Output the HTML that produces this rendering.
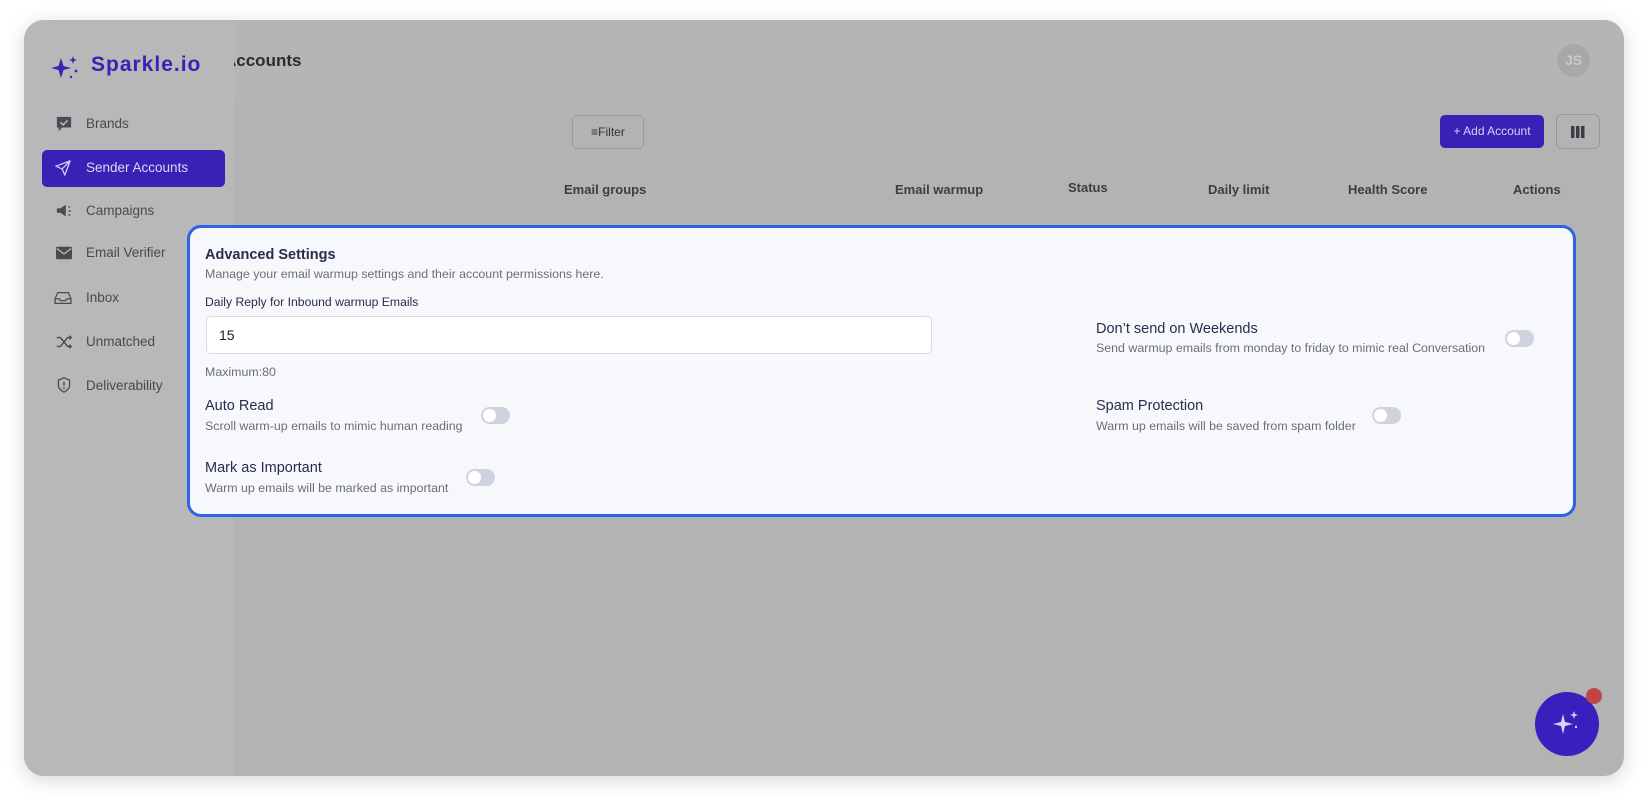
<!DOCTYPE html>
<html><head><meta charset="utf-8"><style>
*{box-sizing:border-box;margin:0;padding:0}
body{width:1648px;height:804px;background:#fff;font-family:"Liberation Sans",sans-serif;position:relative;overflow:hidden}
.frame{position:absolute;left:24px;top:20px;width:1600px;height:756px;border-radius:20px;background:#b3b3b3;overflow:hidden;box-shadow:0 4px 18px rgba(90,90,130,.25);z-index:1}
.side{position:absolute;left:0;top:0;width:210px;height:756px;background:#b8b8b8;z-index:2}
.hdr{position:absolute;left:210px;top:0;right:0;height:83px;background:#b5b5b5}
.a{position:absolute;white-space:nowrap;z-index:3}
.nav{font-size:13.5px;color:#4a4a4a}
.ic{position:absolute;width:18px;height:16px;z-index:3}
.th{font-size:13px;font-weight:bold;color:#3d3d45;position:absolute}
.card{position:absolute;left:187px;top:225px;width:1389px;height:292px;border:3px solid #2e63e6;border-radius:14px;background:#f7f8fb;z-index:10}
.t{position:absolute;white-space:nowrap;color:#2a2c4a}
.d{position:absolute;white-space:nowrap;color:#6b6e7a;font-size:12.4px}
.tg{position:absolute;width:29px;height:17px;border-radius:9px;background:#d0d3de}
.tg::after{content:"";position:absolute;left:2px;top:2px;width:13px;height:13px;border-radius:50%;background:#fff}
</style></head><body>
<div class="frame">
 <div class="hdr"></div>
 <div class="a" style="left:200px;top:31px;font-size:17px;font-weight:bold;color:#2b2b33;z-index:1">Accounts</div>
 <div class="side"></div>
 <svg class="a" style="left:27px;top:34px" width="32" height="28" viewBox="0 0 32 28"><path d="M10 4 L12.5 12 L20 14 L12.5 16 L10 24 L7.5 16 L0 14 L7.5 12Z" fill="#3a22b5"/><path d="M22 2 L23 5 L26 6 L23 7 L22 10 L21 7 L18 6 L21 5Z" fill="#3a22b5"/><circle cx="25" cy="17" r="1.4" fill="#3a22b5"/><circle cx="20" cy="23" r="1.2" fill="#3a22b5"/></svg>
 <div class="a" style="left:67px;top:33px;font-size:21px;font-weight:bold;color:#3a22b5;letter-spacing:1px">Sparkle.io</div>
 <div class="a" style="left:1533px;top:24px;width:33px;height:33px;border-radius:50%;background:#a8a8a8;color:#c8c8c8;font-size:14px;font-weight:bold;text-align:center;line-height:33px">JS</div>

 <svg class="ic" style="left:31px;top:96px" viewBox="0 0 18 18"><path d="M1 1h16v12H7l-4 4v-4H1z" fill="#4a4a55"/><path d="M5 7l3 3 5-5" stroke="#b8b8b8" stroke-width="1.8" fill="none"/></svg>
 <div class="a nav" style="left:62px;top:96px">Brands</div>
 <div class="a" style="left:18px;top:130px;width:183px;height:37px;border-radius:5px;background:#3a20b5"></div>
 <svg class="ic" style="left:30px;top:140px" viewBox="0 0 18 18"><path d="M17 1L1 7l7 3 3 7z M8 10l9-9" stroke="#d6d2f0" stroke-width="1.4" fill="none" stroke-linejoin="round"/></svg>
 <div class="a nav" style="left:62px;top:140px;color:#dcd8f2">Sender Accounts</div>
 <svg class="ic" style="left:31px;top:183px" viewBox="0 0 18 18"><path d="M1 6h4l6-4v13l-6-4H1z" fill="#4a4a55"/><path d="M14 5l2-1M14 9h3M14 13l2 1" stroke="#4a4a55" stroke-width="1.3"/></svg>
 <div class="a nav" style="left:62px;top:183px">Campaigns</div>
 <svg class="ic" style="left:31px;top:225px" viewBox="0 0 18 18"><rect x="0" y="2" width="18" height="14" rx="1.5" fill="#4a4a55"/><path d="M1 4l8 6 8-6" stroke="#b8b8b8" stroke-width="1.5" fill="none"/></svg>
 <div class="a nav" style="left:62px;top:225px">Email Verifier</div>
 <svg class="ic" style="left:30px;top:270px" viewBox="0 0 20 18"><path d="M1 10l3-7h12l3 7v5H1z M1 10h5l1 2h6l1-2h5" stroke="#4a4a55" stroke-width="1.4" fill="none"/></svg>
 <div class="a nav" style="left:62px;top:270px">Inbox</div>
 <svg class="ic" style="left:31px;top:314px" viewBox="0 0 18 18"><path d="M1 4h4l8 10h4M1 14h4l8-10h4M15 2l2 2-2 2M15 12l2 2-2 2" stroke="#4a4a55" stroke-width="1.6" fill="none"/></svg>
 <div class="a nav" style="left:62px;top:314px">Unmatched</div>
 <svg class="ic" style="left:31px;top:357px" viewBox="0 0 18 20"><path d="M9 1l7 3v6c0 4-3 7-7 9-4-2-7-5-7-9V4z" stroke="#4a4a55" stroke-width="1.6" fill="none"/><path d="M9 6v5" stroke="#4a4a55" stroke-width="1.8"/><circle cx="9" cy="14" r="1.1" fill="#4a4a55"/></svg>
 <div class="a nav" style="left:62px;top:358px">Deliverability</div>

 <div class="a" style="left:548px;top:95px;width:72px;height:34px;border:1px solid #9c9c9c;border-radius:5px;font-size:12px;color:#333;line-height:32px;text-align:center">&#8801;Filter</div>
 <div class="a" style="left:1416px;top:95px;width:104px;height:33px;border-radius:5px;background:#3a20b5;color:#d8d4f0;font-size:12px;line-height:33px;text-align:center">+ Add Account</div>
 <div class="a" style="left:1532px;top:94px;width:44px;height:35px;border:1.5px solid #999;border-radius:6px"><svg style="position:absolute;left:14px;top:11px" width="14" height="12"><rect x="0" y="0" width="3.5" height="12" fill="#3d3d45"/><rect x="5" y="0" width="3.5" height="12" fill="#3d3d45"/><rect x="10" y="0" width="3.5" height="12" fill="#3d3d45"/></svg></div>

 <div class="th" style="left:540px;top:162px">Email groups</div>
 <div class="th" style="left:871px;top:162px">Email warmup</div>
 <div class="th" style="left:1044px;top:160px">Status</div>
 <div class="th" style="left:1184px;top:162px">Daily limit</div>
 <div class="th" style="left:1324px;top:162px">Health Score</div>
 <div class="th" style="left:1489px;top:162px">Actions</div>

 <div class="a" style="left:1511px;top:672px;width:64px;height:64px;border-radius:50%;background:#3a1fbf"></div>
 <svg class="a" style="left:1528px;top:688px" width="30" height="30" viewBox="0 0 30 30"><path d="M11 6L13 14L21 16L13 18L11 26L9 18L1 16L9 14Z" fill="#d8d4f5"/><path d="M22 3L23 6L26 7L23 8L22 11L21 8L18 7L21 6Z" fill="#d8d4f5"/><circle cx="24" cy="19" r="1.2" fill="#d8d4f5"/></svg>
 <div class="a" style="left:1562px;top:668px;width:16px;height:16px;border-radius:50%;background:#c04545"></div>
</div>

<div class="card">
 <div class="t" style="left:15px;top:19px;font-size:14.5px;font-weight:bold">Advanced Settings</div>
 <div class="d" style="left:15px;top:39px">Manage your email warmup settings and their account permissions here.</div>
 <div class="t" style="left:15px;top:67px;font-size:12.2px">Daily Reply for Inbound warmup Emails</div>
 <div class="a" style="left:16px;top:88px;width:726px;height:38px;background:#fff;border:1px solid #dcdde3;border-radius:5px;font-size:14px;color:#222;padding:10px 12px">15</div>
 <div class="d" style="left:15px;top:137px">Maximum:80</div>
 <div class="t" style="left:15px;top:170px;font-size:14.5px">Auto Read</div>
 <div class="d" style="left:15px;top:191px">Scroll warm-up emails to mimic human reading</div>
 <div class="tg" style="left:291px;top:179px"></div>
 <div class="t" style="left:15px;top:232px;font-size:14.5px">Mark as Important</div>
 <div class="d" style="left:15px;top:253px">Warm up emails will be marked as important</div>
 <div class="tg" style="left:276px;top:241px"></div>
 <div class="t" style="left:906px;top:93px;font-size:14.5px">Don’t send on Weekends</div>
 <div class="d" style="left:906px;top:113px">Send warmup emails from monday to friday to mimic real Conversation</div>
 <div class="tg" style="left:1315px;top:102px"></div>
 <div class="t" style="left:906px;top:170px;font-size:14.5px">Spam Protection</div>
 <div class="d" style="left:906px;top:191px">Warm up emails will be saved from spam folder</div>
 <div class="tg" style="left:1182px;top:179px"></div>
</div>
</body></html>
